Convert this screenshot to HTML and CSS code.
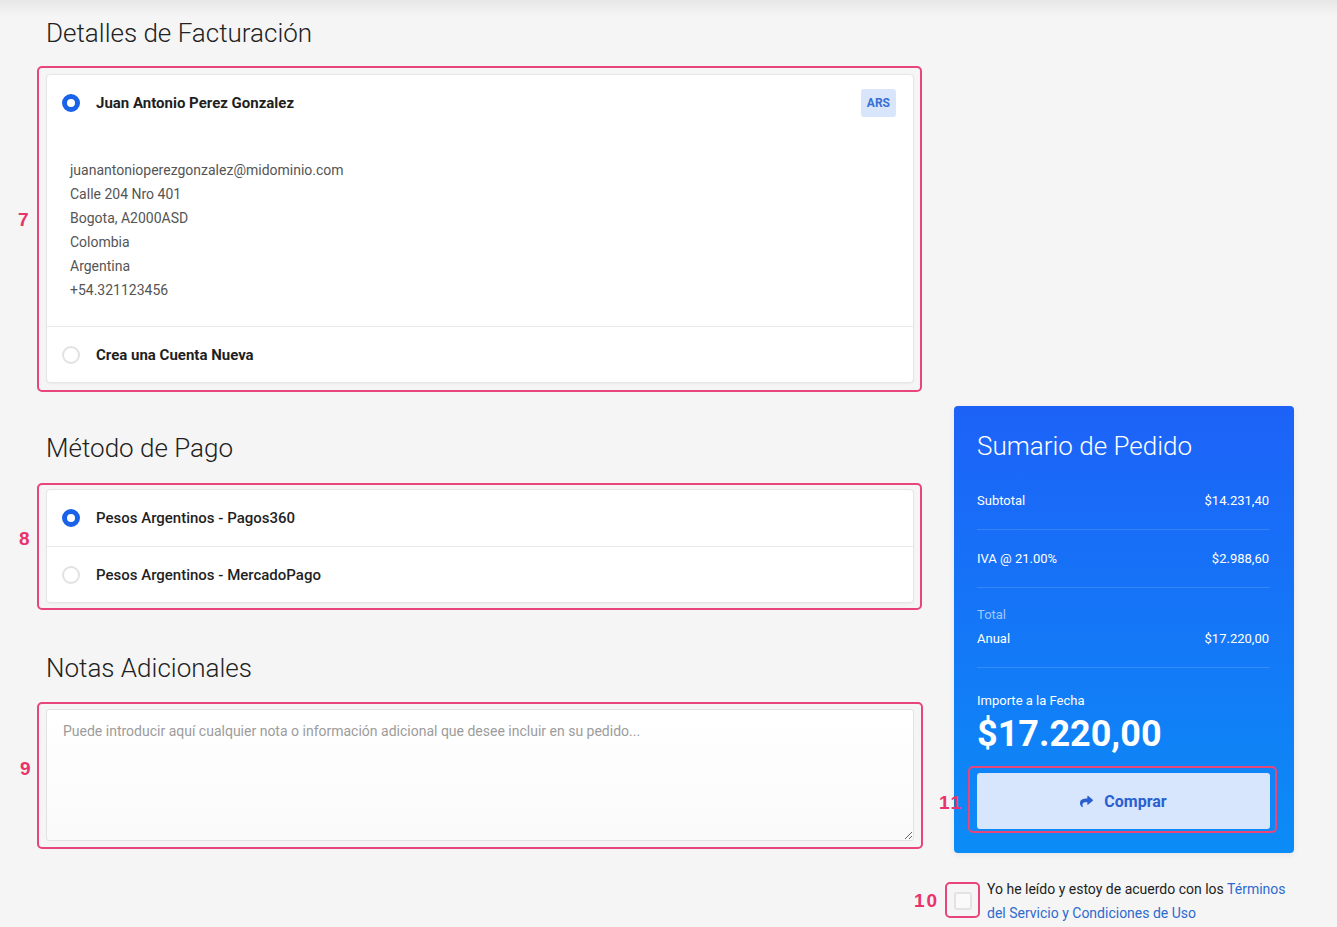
FILE: index.html
```html
<!DOCTYPE html>
<html lang="es">
<head>
    <meta charset="UTF-8">
    <meta name="viewport" content="width=device-width, initial-scale=1.0">
    <title>Checkout</title>
    <link rel="stylesheet" href="styles.css">
</head>
<body>
    <div class="page">
        <main class="main-col">
            <!-- Billing -->
            <section class="block">
                <h2 class="block-title">Detalles de Facturación</h2>
                <div class="mark mark-billing">
                    <span class="mark-num">7</span>
                    <div class="card">
                        <label class="card-row">
                            <span class="radio checked"></span>
                            <span class="row-label">Juan Antonio Perez Gonzalez</span>
                            <span class="badge">ARS</span>
                        </label>
                        <div class="address">
                            <div>juanantonioperezgonzalez@midominio.com</div>
                            <div>Calle 204 Nro 401</div>
                            <div>Bogota, A2000ASD</div>
                            <div>Colombia</div>
                            <div>Argentina</div>
                            <div>+54.321123456</div>
                        </div>
                        <label class="card-row">
                            <span class="radio"></span>
                            <span class="row-label">Crea una Cuenta Nueva</span>
                        </label>
                    </div>
                </div>
            </section>

            <!-- Payment -->
            <section class="block">
                <h2 class="block-title">Método de Pago</h2>
                <div class="mark mark-payment">
                    <span class="mark-num">8</span>
                    <div class="card">
                        <label class="card-row">
                            <span class="radio checked"></span>
                            <span class="row-label medium">Pesos Argentinos - Pagos360</span>
                        </label>
                        <label class="card-row">
                            <span class="radio"></span>
                            <span class="row-label medium">Pesos Argentinos - MercadoPago</span>
                        </label>
                    </div>
                </div>
            </section>

            <!-- Notes -->
            <section class="block">
                <h2 class="block-title">Notas Adicionales</h2>
                <div class="mark mark-notes">
                    <span class="mark-num">9</span>
                    <textarea class="notes" placeholder="Puede introducir aquí cualquier nota o información adicional que desee incluir en su pedido..."></textarea>
                </div>
            </section>
        </main>

        <aside class="side-col">
            <div class="summary">
                <h2 class="summary-title">Sumario de Pedido</h2>
                <div class="sum-row">
                    <span>Subtotal</span>
                    <span>$14.231,40</span>
                </div>
                <div class="sum-row">
                    <span>IVA @ 21.00%</span>
                    <span>$2.988,60</span>
                </div>
                <div class="sum-total">
                    <div class="sum-total-label">Total</div>
                    <div class="sum-total-row">
                        <span>Anual</span>
                        <span>$17.220,00</span>
                    </div>
                </div>
                <div class="due-label">Importe a la Fecha</div>
                <div class="due-amount">$17.220,00</div>
                <div class="mark mark-buy">
                    <span class="mark-num">11</span>
                    <button class="buy-btn">
                        <svg class="buy-icon" viewBox="0 0 512 512" width="13" height="13"><path d="M503.7 189.8L327.7 37.9C312.3 24.5 288 35.3 288 56v80.1C127.4 137.9 0 170.1 0 322.3c0 61.4 39.6 122.3 83.3 154.1 13.7 9.9 33.1-2.5 28.1-18.6C66.1 312.8 132.9 274.3 288 272.1V360c0 20.7 24.3 31.5 39.7 18.2l176-152c11.1-9.6 11.1-26.8 0-36.4z" fill="currentColor"/></svg>
                        Comprar
                    </button>
                </div>
            </div>

            <div class="terms">
                <div class="mark mark-check">
                    <span class="mark-num">10</span>
                    <span class="checkbox"></span>
                </div>
                <p class="terms-text">Yo he leído y estoy de acuerdo con los <a href="#">Términos del Servicio y Condiciones de Uso</a></p>
            </div>
        </aside>
    </div>
</body>
</html>
```

FILE: styles.css
```css
* {
    margin: 0;
    padding: 0;
    box-sizing: border-box;
}

body {
    font-family: Roboto, 'Liberation Sans', sans-serif;
    color: #222;
    background: linear-gradient(to bottom, #e7e7e7 0, #f5f5f5 16px, #f5f5f5 100%);
    min-height: 100vh;
}

.page {
    display: grid;
    grid-template-columns: 868px 340px;
    gap: 40px;
    padding: 18px 0 0 46px;
}

/* ---------- left column ---------- */

.block {
    margin-bottom: 50px;
}

.block-title {
    font-size: 26px;
    font-weight: 300;
    line-height: 31px;
    color: #222;
    margin-bottom: 25px;
}

.card {
    background: #fff;
    border: 1px solid #e6e6e6;
    border-radius: 4px;
    box-shadow: 0 1px 2px rgba(0, 0, 0, 0.04);
}

.card-row {
    display: flex;
    align-items: center;
    height: 56px;
    padding: 0 17px 0 15px;
    gap: 16px;
    cursor: pointer;
}

.card-row + .card-row,
.address + .card-row {
    border-top: 1px solid #e9e9e9;
}

.radio {
    width: 18px;
    height: 18px;
    border-radius: 50%;
    border: 2px solid #e2e2e2;
    background: #fff;
    flex-shrink: 0;
}

.radio.checked {
    border: 5px solid #1a62e8;
}

.row-label {
    font-size: 15px;
    font-weight: 700;
    color: #1f1f1f;
}

.row-label.medium {
    font-weight: 500;
}

.badge {
    margin-left: auto;
    background: #d8e5fb;
    color: #3a6fd4;
    font-size: 12px;
    font-weight: 700;
    line-height: 28px;
    padding: 0 6px;
    border-radius: 3px;
}

.address {
    padding: 27px 24px 24px 23px;
    font-size: 14px;
    line-height: 24px;
    color: #555;
}

.notes {
    display: block;
    width: 100%;
    height: 132px;
    padding: 13px 16px;
    border: 1px solid #e2e2e2;
    border-radius: 3px;
    background: linear-gradient(to bottom, #fff, #fafafa);
    font-family: Roboto, 'Liberation Sans', sans-serif;
    font-size: 14px;
    color: #333;
    resize: vertical;
    outline: none;
}

.notes::placeholder {
    color: #9c9c9c;
}

/* ---------- annotation outlines ---------- */

.mark {
    position: relative;
}

.mark::after {
    content: '';
    position: absolute;
    border: 2px solid #e8457a;
    border-radius: 5px;
    pointer-events: none;
}

.mark-num {
    position: absolute;
    font-family: 'Liberation Sans', Arial, sans-serif;
    font-size: 19px;
    font-weight: 700;
    color: #e8336b;
    line-height: 20px;
    letter-spacing: 2px;
}

.mark-billing::after { inset: -8px -8px -9px -9px; }
.mark-billing .mark-num { left: -28px; top: 136px; }

.mark-payment::after { inset: -6px -8px -7px -9px; }
.mark-payment .mark-num { left: -27px; top: 40px; }

.mark-notes::after { inset: -7px -9px -8px -9px; }
.mark-notes .mark-num { left: -26px; top: 50px; }

.mark-buy::after { inset: -7px -7px -4px -9px; }
.mark-buy .mark-num { left: -38px; top: 20px; }

.mark-check::after { inset: -10px -8px -8px -9px; }
.mark-check .mark-num { left: -40px; top: -1px; }

/* ---------- right column ---------- */

.side-col {
    margin-top: 388px;
}

.summary {
    background: linear-gradient(to bottom, #1d62f8 0%, #0b8cf6 100%);
    border-radius: 4px;
    padding: 25px 24px 24px 23px;
    color: #fff;
    box-shadow: 0 2px 6px rgba(0, 0, 0, 0.06);
}

.summary-title {
    font-size: 26px;
    font-weight: 300;
    line-height: 31px;
    margin-bottom: 10px;
}

.sum-row {
    display: flex;
    justify-content: space-between;
    padding: 20px 1px 20px 0;
    font-size: 13px;
    line-height: 17px;
    border-bottom: 1px solid rgba(255, 255, 255, 0.14);
}

.sum-total {
    padding: 18px 1px 20px 0;
    font-size: 13px;
    line-height: 17px;
    border-bottom: 1px solid rgba(255, 255, 255, 0.14);
}

.sum-total-label {
    color: rgba(255, 255, 255, 0.6);
}

.sum-total-row {
    display: flex;
    justify-content: space-between;
    margin-top: 7px;
}

.due-label {
    margin-top: 24px;
    font-size: 13px;
    line-height: 17px;
}

.due-amount {
    margin-top: 4px;
    font-size: 36px;
    font-weight: 700;
    line-height: 42px;
}

.mark-buy {
    margin-top: 18px;
}

.buy-btn {
    width: 100%;
    height: 56px;
    border: none;
    border-radius: 3px;
    background: #d7e5fd;
    color: #2a5fd0;
    font-family: Roboto, 'Liberation Sans', sans-serif;
    font-size: 16px;
    font-weight: 700;
    display: flex;
    align-items: center;
    justify-content: center;
    gap: 11px;
    cursor: pointer;
}

.buy-icon {
    margin-top: 1px;
}

.terms {
    display: flex;
    align-items: center;
    gap: 15px;
    margin-top: 24px;
}

.checkbox {
    display: block;
    width: 18px;
    height: 18px;
    border: 2px solid #e3e3e3;
    border-radius: 3px;
    background: #fafafa;
}

.terms-text {
    font-size: 14px;
    line-height: 24px;
    color: #222;
}

.terms-text a {
    color: #2d6bcf;
    text-decoration: none;
}
```
